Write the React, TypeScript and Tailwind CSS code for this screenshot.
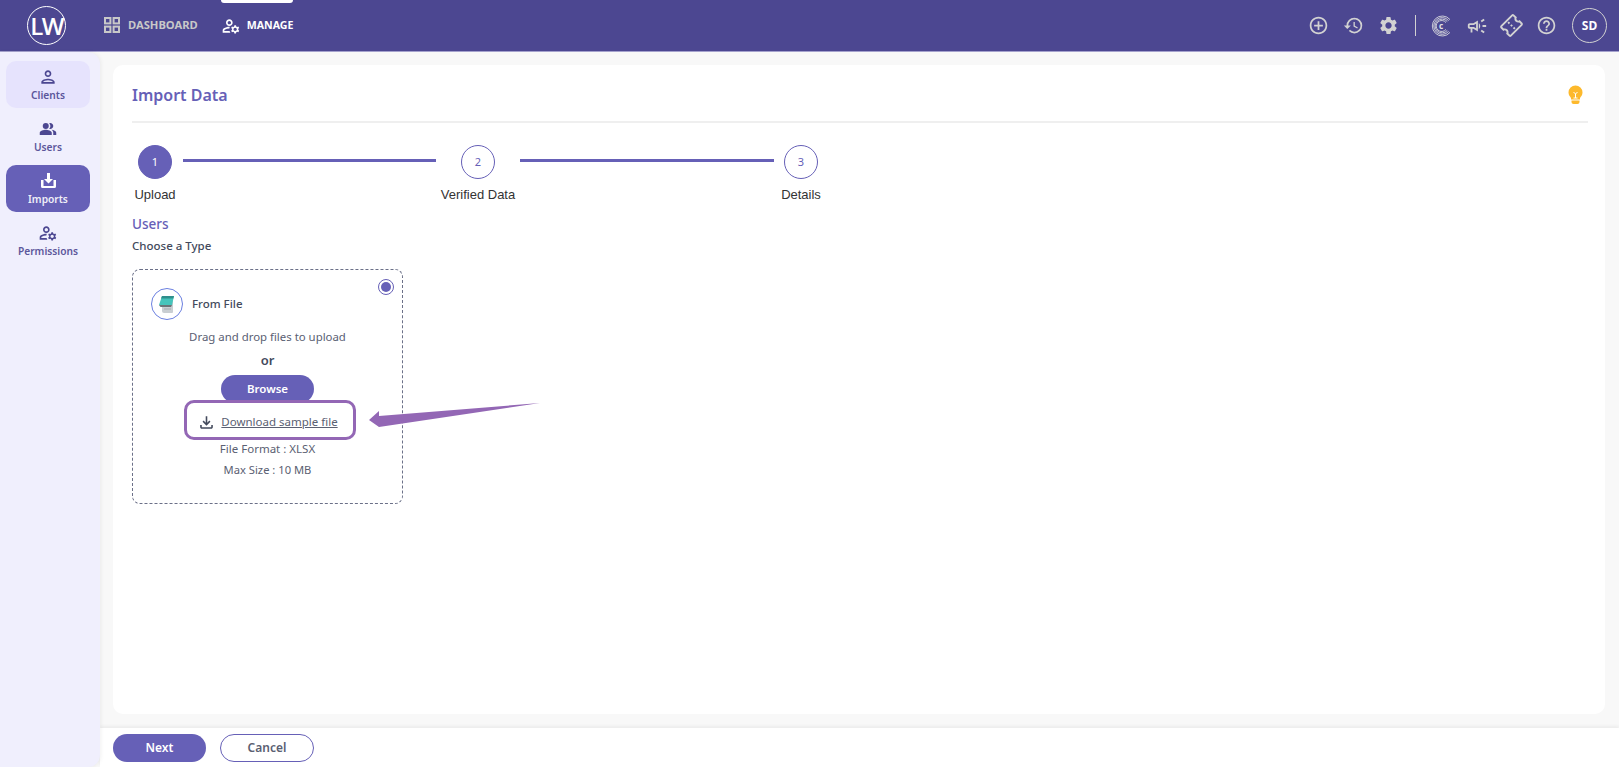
import React from "react";
import {
  MdOutlineManageAccounts, MdOutlineAddCircleOutline, MdHistory, MdSettings,
  MdOutlineCampaign, MdOutlineConfirmationNumber, MdOutlineHelpOutline, MdOutlinePerson, MdPeopleAlt,
  MdOutlineFileDownload,
} from "react-icons/md";

const font = "font-['Noto_Sans','Open_Sans',sans-serif]";

function CLogo() {
  return (
    <svg width="22" height="22" viewBox="0 0 22 22" fill="none" stroke="#c9c9d6">
      <path d="M20 4.6A10 10 0 1 0 20 17.4" strokeWidth="1" />
      <path d="M18.6 5.6A8.4 8.4 0 1 0 18.6 16.4" strokeWidth="1" />
      <path d="M17.3 6.6A6.9 6.9 0 1 0 17.3 15.4" strokeWidth="1" />
      <path d="M16 7.6A5.5 5.5 0 1 0 16 14.4" strokeWidth="1" />
      <text x="11" y="14" fontSize="8" fontWeight="700" fill="#e5e5e5" stroke="none" textAnchor="middle" fontFamily="Noto Sans">c</text>
    </svg>
  );
}

function GridIcon() {
  return (
    <svg width="16" height="16" viewBox="0 0 16 16" fill="none" stroke="currentColor" strokeWidth="2">
      <rect x="1" y="1" width="5.4" height="5.4" />
      <rect x="9.6" y="1" width="5.4" height="5.4" />
      <rect x="1" y="9.6" width="5.4" height="5.4" />
      <rect x="9.6" y="9.6" width="5.4" height="5.4" />
    </svg>
  );
}

function ImportIcon() {
  return (
    <svg width="17" height="17" viewBox="0 0 17 17" fill="currentColor">
      <path d="M7 1h3v6h3l-4.5 4.5L4 7h3z" />
      <path d="M1 8h2.5v6h10V8H16v6.5a1.5 1.5 0 0 1-1.5 1.5h-12A1.5 1.5 0 0 1 1 14.500z" />
    </svg>
  );
}

function BulbIcon() {
  return (
    <svg width="15" height="20" viewBox="0 0 15 20">
      <path d="M7.500 0.500A7 7 0 0 1 14.500 7.500c0 2.600-1.500 4-2.500 5.500v1.500H3V13C2 11.500 0.500 10.100 0.500 7.500A7 7 0 0 1 7.500 0.500z" fill="#fdb92c" />
      <path d="M3.500 15.500h8v1.500a2 2 0 0 1-2 2h-4a2 2 0 0 1-2-2z" fill="#fdb92c" />
      <path d="M5.500 7l2 2 2-2M7.500 9v4" stroke="#fff" strokeWidth="1" fill="none" />
      <path d="M5.500 13h4" stroke="#fff" strokeWidth="1" />
    </svg>
  );
}

function FileGlyph() {
  return (
    <svg width="20" height="20" viewBox="0 0 20 20">
      <path d="M5 7h11v11a1 1 0 0 1-1 1H7a2 2 0 0 1-2-2z" fill="#c9ced2" />
      <path d="M7 9h7M7 12h7M7 15h7" stroke="#a5abb0" strokeWidth="1" />
      <path d="M5 2h12l-2 9H2z" fill="#46c4bb" />
      <path d="M5 2h12l-.6 2.400H4z" fill="#2f8f8c" />
      <path d="M2 11h13l-1 2H3.500z" fill="#6b7478" />
    </svg>
  );
}

function SideItem({ icon, label, state }: { icon: React.ReactNode; label: string; state?: "soft" | "active" }) {
  const bg = state === "active" ? "bg-[#6660b7] text-white" : state === "soft" ? "bg-[#e6e3fd] text-[#4c4791]" : "text-[#4c4791]";
  return (
    <div className={`h-[47px] rounded-[10px] flex flex-col items-center justify-center pb-[2px] ${bg}`}>
      <div className="h-[22px] flex items-center">{icon}</div>
      <span className="text-[10.2px] leading-[14px] font-semibold opacity-90">{label}</span>
    </div>
  );
}

function Step({ n, label, active }: { n: number; label: string; active?: boolean }) {
  return (
    <div className="w-[34px] flex flex-col items-center">
      <div className={`w-[34px] h-[34px] rounded-full flex items-center justify-center text-[11px] border ${active ? "bg-[#6660b7] border-[#6660b7] text-white" : "bg-white border-[#6660b7] text-[#6660b7]"}`}>{n}</div>
      <span className="mt-[8px] text-[13px] leading-[16px] whitespace-nowrap text-[#333] font-['Liberation_Sans',sans-serif]">{label}</span>
    </div>
  );
}

export default function App() {
  return (
    <div className={`h-[767px] w-[1619px] flex flex-col overflow-hidden bg-[#f8f8f8] ${font}`}>
      <header className="h-[52px] shrink-0 bg-[#4c4791] border-b border-[#a5a2cd] flex items-center pl-[27px] pr-[12px] relative">
        <div className="w-[39px] h-[39px] rounded-full border border-white flex items-center justify-center text-white text-[24px] tracking-[-1.5px] font-semibold font-['Open_Sans',sans-serif]">LW</div>
        <nav className="ml-[38px] flex items-center font-bold">
          <div className="flex items-center text-[#c8c8c8] text-[11.2px]">
            <GridIcon />
            <span className="ml-[8px]">DASHBOARD</span>
          </div>
          <div className="ml-[23px] relative flex items-center text-white text-[10.6px]">
            <div className="absolute left-0 right-0 top-[-16px] h-[3px] rounded-b-sm bg-white" />
            <MdOutlineManageAccounts size={20} />
            <span className="ml-[6px]">MANAGE</span>
          </div>
        </nav>
        <div className="ml-auto flex items-center text-[#d2d2d2]">
          <MdOutlineAddCircleOutline size={21} />
          <MdHistory size={21} className="ml-[14px]" />
          <MdSettings size={21} className="ml-[14px]" />
          <div className="ml-[16px] w-px h-[21px] bg-[#d2d2d2]" />
          <div className="ml-[14px]"><CLogo /></div>
          <MdOutlineCampaign size={22} className="ml-[14px]" />
          <MdOutlineConfirmationNumber size={23} className="ml-[12px] -rotate-45" />
          <MdOutlineHelpOutline size={21} className="ml-[13px]" />
          <div className="ml-[15px] w-[35px] h-[35px] rounded-full border border-[#d2d2d2] flex items-center justify-center text-white text-[12px] font-bold">SD</div>
        </div>
      </header>
      <div className="flex-1 flex min-h-0">
        <aside className="w-[100px] shrink-0 bg-[#f0effd] rounded-r-[12px] shadow-[1px_0_4px_rgba(0,0,0,0.06)] pl-[6px] pr-[10px] pt-[9px] flex flex-col gap-[5px] z-10">
          <SideItem state="soft" label="Clients" icon={<MdOutlinePerson size={20} />} />
          <SideItem label="Users" icon={<MdPeopleAlt size={18} />} />
          <SideItem state="active" label="Imports" icon={<ImportIcon />} />
          <SideItem label="Permissions" icon={<MdOutlineManageAccounts size={20} />} />
        </aside>
        <div className="flex-1 flex flex-col min-w-0">
          <main className="flex-1 min-h-0 pl-[13px] pr-[14px] pt-[13px] pb-[14px]">
            <section className="h-full bg-white rounded-[10px] pl-[19px] pr-[17px] relative">
              <div className="h-[58px] pt-[4px] flex items-center justify-between border-b-2 border-[#efefef]">
                <h1 className="text-[16px] font-semibold text-[#6660b7]">Import Data</h1>
                <div className="mr-[5px]"><BulbIcon /></div>
              </div>
              <div className="mt-[22px] ml-[6px] flex items-start h-[57px]">
                <Step n={1} label="Upload" active />
                <div className="w-[253px] h-[3px] bg-[#6660b7] mt-[14px] ml-[11px]" />
                <div className="ml-[25px]"><Step n={2} label="Verified Data" /></div>
                <div className="w-[254px] h-[3px] bg-[#6660b7] mt-[14px] ml-[25px]" />
                <div className="ml-[10px]"><Step n={3} label="Details" /></div>
              </div>
              <h2 className="mt-[13px] text-[13.5px] leading-[18px] font-medium text-[#6660b7]">Users</h2>
              <p className="mt-[4px] text-[11.5px] leading-[18px] font-medium text-[#434a5c]">Choose a Type</p>
              <div className="mt-[14px] w-[271px] h-[235px] rounded-[8px] border border-dashed border-[#6b7088] relative px-[18px] pt-[18px] text-[#5a6072]">
                <div className="absolute right-[8px] top-[9px] w-[16px] h-[16px] rounded-full border border-[#6660b7] p-[2px]">
                  <div className="w-full h-full rounded-full bg-[#6660b7]" />
                </div>
                <div className="flex items-center">
                  <div className="w-[32px] h-[32px] rounded-full border border-[#6b7fe0] flex items-center justify-center">
                    <FileGlyph />
                  </div>
                  <span className="ml-[9px] text-[11.5px] font-medium text-[#434a5c] -mt-[1px]">From File</span>
                </div>
                <div className="flex flex-col items-center -ml-[18px] -mr-[18px] w-[269px]">
                  <p className="mt-[8px] text-[11.4px] leading-[18px]">Drag and drop files to upload</p>
                  <p className="mt-[5px] text-[13px] leading-[18px] font-semibold text-[#434a5c]">or</p>
                  <button className="mt-[6px] w-[93px] h-[28px] rounded-full bg-[#6660b7] text-white text-[11.5px] font-semibold">Browse</button>
                  <div className="mt-[7px] h-[24px] flex items-center">
                    <MdOutlineFileDownload size={19} className="text-[#434a5c]" />
                    <span className="ml-[5px] text-[11.5px] underline">Download sample file</span>
                  </div>
                  <p className="mt-[6px] text-[11.5px] leading-[18px]">File Format : XLSX</p>
                  <p className="mt-[3px] text-[11.2px] leading-[18px]">Max Size : 10 MB</p>
                </div>
                <div className="absolute left-[51px] top-[130px] w-[172px] h-[40px] rounded-[10px] border-[3px] border-[#9367b5]" />
                <svg className="absolute left-[236px] top-[132px]" width="172" height="30" viewBox="0 0 172 30">
                  <path d="M0 18 L10 9 L10 14 L171 1 L10 25 Z" fill="#9367b5" />
                </svg>
              </div>
            </section>
          </main>
          <footer className="h-[39px] shrink-0 bg-white shadow-[0_-2px_3px_rgba(0,0,0,0.05)] pl-[13px] pt-[1px] flex items-center gap-[14px] text-[12px] font-semibold">
            <button className="w-[93px] h-[28px] rounded-full bg-[#6660b7] text-white">Next</button>
            <button className="w-[94px] h-[28px] rounded-full border border-[#6660b7] bg-white text-[#5a6072]">Cancel</button>
          </footer>
        </div>
      </div>
    </div>
  );
}
